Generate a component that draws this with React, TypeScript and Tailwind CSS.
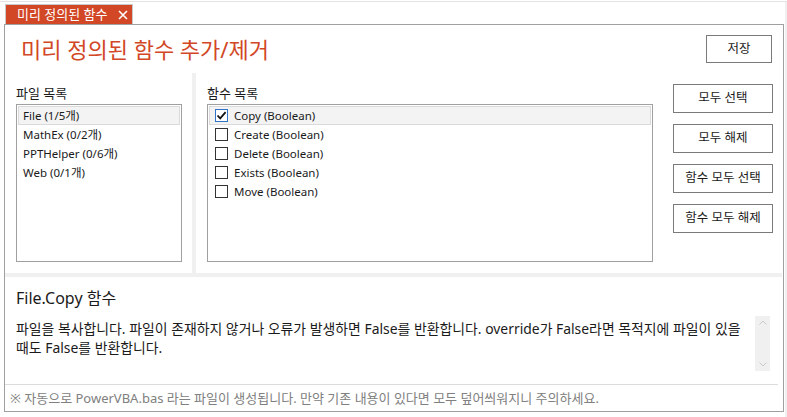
const files = [
	{ name: "File (1/5개)", selected: true },
	{ name: "MathEx (0/2개)", selected: false },
	{ name: "PPTHelper (0/6개)", selected: false },
	{ name: "Web (0/1개)", selected: false },
];

const functions = [
	{ name: "Copy (Boolean)", checked: true },
	{ name: "Create (Boolean)", checked: false },
	{ name: "Delete (Boolean)", checked: false },
	{ name: "Exists (Boolean)", checked: false },
	{ name: "Move (Boolean)", checked: false },
];

const actions = ["모두 선택", "모두 해제", "함수 모두 선택", "함수 모두 해제"];

function CheckBox({ checked }: { checked: boolean }) {
	return (
		<div
			className={`w-[13px] h-[13px] border bg-white flex items-center justify-center ${
				checked ? "border-[#2f74c7]" : "border-[#333333]"
			}`}
		>
			{checked && (
				<svg width="11" height="11" viewBox="0 0 11 11">
					<path d="M1.5 5.5 L4.2 8.3 L9.6 2.2" stroke="#111" strokeWidth="1.8" fill="none" />
				</svg>
			)}
		</div>
	);
}

export default function App() {
	return (
		<div className="w-[787px] h-[417px] bg-white pt-px font-['Noto_Sans','Noto_Sans_CJK_KR',sans-serif] text-[#1a1a1a] overflow-hidden">
			<div className="h-px bg-[#e3e3e3]" />
			<div className="border-r-2 border-[#f0f0f0] h-[415px]">
				{/* tab */}
				<div className="pl-[5px] pt-[2px] flex">
					<div className="h-[20px] w-[128px] bg-[#d24726] border border-b-0 border-[#c9c9c9] text-white text-[13px] flex items-center pl-[11px] gap-[11px]">
						<span className="leading-none">미리 정의된 함수</span>
						<svg width="10" height="10" viewBox="0 0 10 10">
							<path d="M1 1 L9 9 M9 1 L1 9" stroke="white" strokeWidth="1.6" />
						</svg>
					</div>
				</div>

				<div className="ml-[4px] mr-[1px] h-[388px] border border-[#a0a0a0] flex flex-col">
					{/* header */}
					<div className="flex justify-between items-start pl-[16px] pr-[11px] pt-[10px] h-[48px]">
						<h1 className="text-[22px] leading-[28px] text-[#d24726]">미리 정의된 함수 추가/제거</h1>
						<button className="w-[66px] h-[28px] border border-[#7a7a7a] bg-white text-[12.5px]">저장</button>
					</div>

					{/* lists */}
					<div className="flex h-[200px]">
						<div className="w-[187px] pl-[11px] pt-[11px]">
							<div className="text-[13px] leading-[18px] h-[20px]">파일 목록</div>
							<div className="w-[166px] h-[158px] border border-[#a0a0a0] p-px">
								{files.map((f) => (
									<div
										key={f.name}
										className={`h-[19px] pl-[4px] text-[11.5px] leading-[18px] border ${
											f.selected ? "bg-[#f3f3f3] border-[#dadada]" : "border-transparent"
										}`}
									>
										{f.name}
									</div>
								))}
							</div>
						</div>
						<div className="w-[4px] bg-[#f0f0f0]" />
						<div className="flex-1 pl-[11px] pt-[11px]">
							<div className="text-[13px] leading-[18px] h-[20px]">함수 목록</div>
							<div className="w-[446px] h-[158px] border border-[#a0a0a0] p-px">
								{functions.map((f) => (
									<div
										key={f.name}
										className={`h-[19px] pl-[5px] flex items-center gap-[6px] text-[11.5px] border ${
											f.checked ? "bg-[#f3f3f3] border-[#dadada]" : "border-transparent"
										}`}
									>
										<CheckBox checked={f.checked} />
										<span className="leading-[18px]">{f.name}</span>
									</div>
								))}
							</div>
						</div>
						<div className="pr-[10px] pt-[11px] flex flex-col gap-[11px]">
							{actions.map((a) => (
								<button key={a} className="w-[100px] h-[29px] border border-[#7a7a7a] bg-white text-[12.5px]">
									{a}
								</button>
							))}
						</div>
					</div>

					<div className="h-[4px] bg-[#f0f0f0] mr-[1px]" />

					{/* description */}
					<div className="pl-[11px] pr-[12px] pt-[11px] h-[107px]">
						<div className="text-[16px] leading-[21px]">File.Copy 함수</div>
						<div className="flex mt-[10px]">
							<p className="flex-1 text-[13.9px] leading-[19px] whitespace-nowrap">
								파일을 복사합니다. 파일이 존재하지 않거나 오류가 발생하면 False를 반환합니다. override가 False라면 목적지에 파일이 있을
								<br />
								때도 False를 반환합니다.
							</p>
							<div className="w-[15px] h-[55px] bg-[#f0f0f0] flex flex-col justify-between items-center py-[4px] -mt-[3px] mr-[1px]">
								<svg width="8" height="5" viewBox="0 0 8 5">
									<path d="M0.5 4.5 L4 1 L7.5 4.5" stroke="#c8c8c8" fill="none" />
								</svg>
								<svg width="8" height="5" viewBox="0 0 8 5">
									<path d="M0.5 0.5 L4 4 L7.5 0.5" stroke="#c8c8c8" fill="none" />
								</svg>
							</div>
						</div>
					</div>

					<div className="h-px bg-[#dcdcdc] mr-[5px]" />
					<div className="pl-[5px] pt-[4px] text-[13px] leading-[18px] text-[#808080]">
						※ 자동으로 PowerVBA.bas 라는 파일이 생성됩니다. 만약 기존 내용이 있다면 모두 덮어씌워지니 주의하세요.
					</div>
				</div>
			</div>
		</div>
	);
}
